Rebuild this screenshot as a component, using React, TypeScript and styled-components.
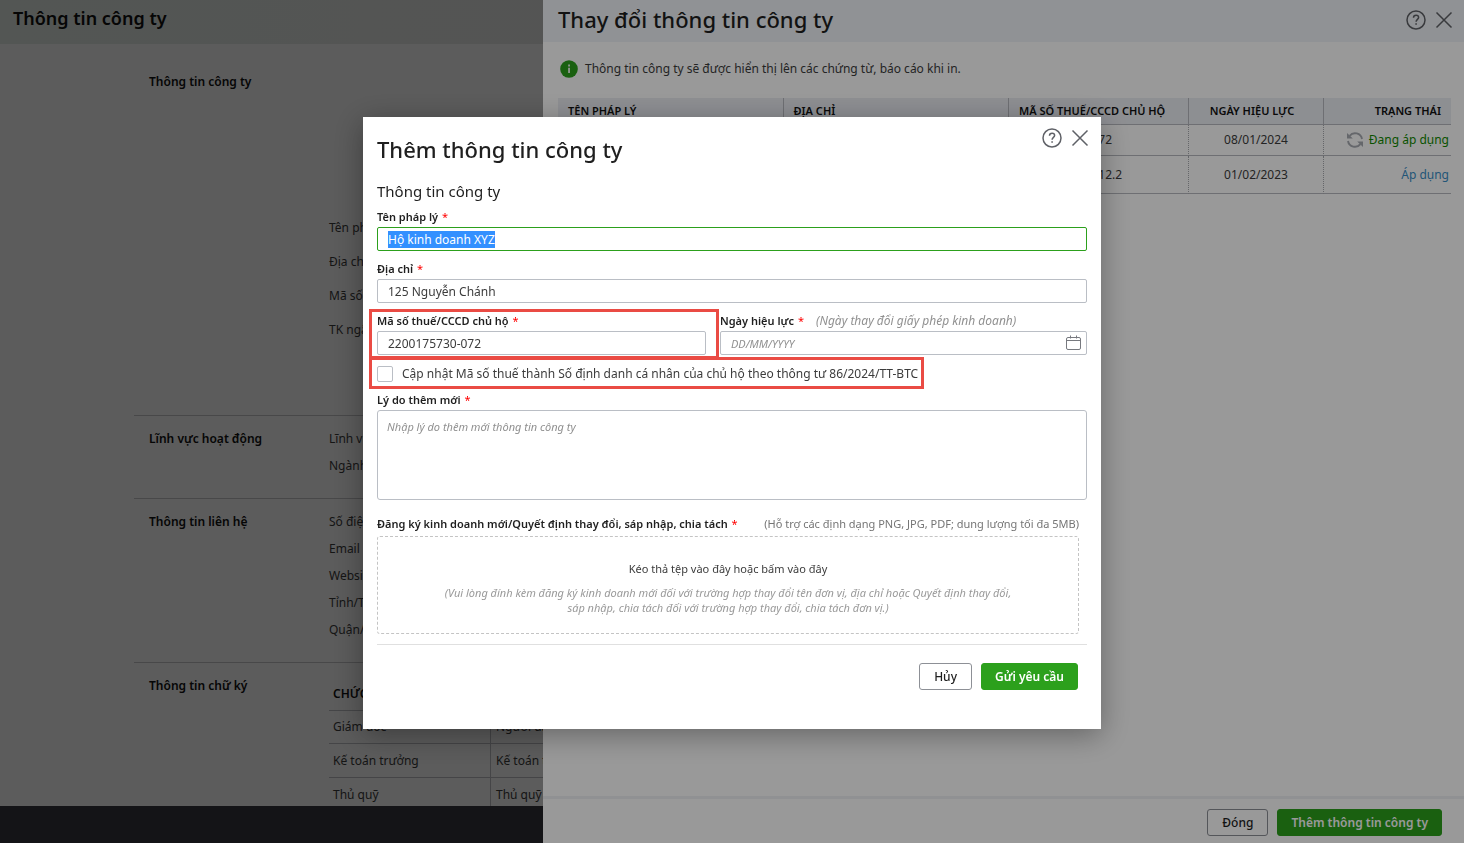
import React, { useEffect, useRef } from "react";
import styled, { createGlobalStyle } from "styled-components";

const GlobalStyle = createGlobalStyle`
  *, *::before, *::after { box-sizing: border-box; }
  body {
    margin: 0;
    font-family: "Noto Sans", sans-serif;
    font-size: 12px;
    line-height: 16px;
    color: #3c3c3c;
    background: #fff;
  }
  button, input, textarea { font-family: inherit; font-size: inherit; color: inherit; margin: 0; }
  h1, h2, h3, p { margin: 0; font-weight: inherit; }
`;

/* ---------- Company page ---------- */

const Page = styled.div`
  display: flex;
  flex-direction: column;
  height: 100vh;
  overflow: hidden;
`;

const PageHeader = styled.header`
  flex: none;
  height: 44px;
  padding: 6px 13px;
  background: linear-gradient(90deg, #e6eeea 0%, #ececec 50%);
`;

const PageTitle = styled.h1`
  font-size: 18px;
  line-height: 24px;
  font-weight: 600;
  color: #111;
`;

const PageBody = styled.main`
  flex: 1;
  min-height: 0;
  overflow: hidden;
  padding-left: 134px;
`;

const PageFooter = styled.div`
  flex: none;
  height: 37px;
  background: #3a3a42;
`;

const Section = styled.section<{ $first?: boolean }>`
  display: grid;
  grid-template-columns: 180px 1fr;
  padding: ${(p) => (p.$first ? "24px 0 68px 15px" : "9px 0 19px 15px")};
  border-top: ${(p) => (p.$first ? "none" : "1px solid #c8c8cc")};
`;

const SectionTitle = styled.h2`
  font-size: 12px;
  line-height: 27px;
  font-weight: 600;
  color: #111;
`;

const FactList = styled.ul<{ $row: number; $offset?: number }>`
  list-style: none;
  margin: ${(p) => p.$offset || 0}px 0 0;
  padding: 0;
  line-height: ${(p) => p.$row}px;
`;

const SignTable = styled.table`
  margin-top: 5px;
  width: 100%;
  border-collapse: separate;
  border-spacing: 0;
  text-align: left;

  th, td {
    height: 34px;
    padding: 0 4px;
    border-bottom: 1px solid #c0c2c6;
    font-weight: 400;
  }
  th { font-weight: 600; color: #111; }
  td + td { padding-left: 5px; }
  th:first-child, td:first-child { width: 162px; }
  td:first-child { border-right: 1px solid #c0c2c6; }
  tbody tr:first-child td { height: 33px; }
`;

/* ---------- Shared parts ---------- */

const Scrim = styled.div`
  position: fixed;
  inset: 0;
  display: flex;
  background: rgba(0, 0, 0, 0.4);
`;

const DialogTitle = styled.h2`
  flex: 1;
  font-size: 22px;
  line-height: 30px;
  font-weight: 500;
  color: #1f1f1f;
`;

const Tools = styled.div`
  display: flex;
  gap: 6px;
`;

const IconButton = styled.button`
  display: grid;
  place-items: center;
  width: 22px;
  height: 22px;
  padding: 0;
  border: 0;
  background: none;
  color: #5f6167;
`;

const Button = styled.button<{ $primary?: boolean }>`
  height: 27px;
  padding: 0 ${(p) => (p.$primary ? 13 : 14)}px;
  border: 1px solid ${(p) => (p.$primary ? "#2ca01c" : "#8d9096")};
  border-radius: 3px;
  background: ${(p) => (p.$primary ? "#2ca01c" : "transparent")};
  color: ${(p) => (p.$primary ? "#fff" : "#1f1f1f")};
  font-weight: ${(p) => (p.$primary ? 600 : 500)};
`;

const Actions = styled.footer<{ $drawer?: boolean }>`
  display: flex;
  justify-content: flex-end;
  gap: 9px;
  padding: ${(p) => (p.$drawer ? "10px 22px 7px" : "18px 9px 39px")};
  margin-top: ${(p) => (p.$drawer ? "auto" : "10px")};
  border-top: ${(p) => (p.$drawer ? "3px solid #f1f2f6" : "1px solid #e0e0e0")};
`;

/* ---------- Drawer ---------- */

const Drawer = styled.aside`
  display: flex;
  flex-direction: column;
  width: 921px;
  max-width: 100%;
  min-height: 100%;
  margin-left: auto;
  background: #fff;
`;

const DrawerHeader = styled.header`
  display: flex;
  align-items: center;
  height: 42px;
  padding: 0 9px 2px 15px;
  background: #f1f4f8;

  ${DialogTitle} { margin-bottom: 2px; }
`;

const Notice = styled.p`
  display: flex;
  align-items: center;
  gap: 7px;
  padding: 18px 17px 20px;
`;

const HistoryTable = styled.table`
  table-layout: fixed;
  width: calc(100% - 28px);
  margin-left: 15px;
  border-collapse: separate;
  border-spacing: 0;

  th, td {
    padding: 0 10px;
    border-bottom: 1px solid #b8bac0;
    border-right: 1px dotted #a8aab0;
    text-align: left;
    font-weight: 400;
  }
  th {
    height: 27px;
    font-size: 11px;
    font-weight: 600;
    color: #111;
    background: #eceef4;
    border-right: 1px solid #b8bac0;
  }
  th:last-child, td:last-child { border-right: 0; text-align: right; }
  th:nth-child(4), td:nth-child(4) { text-align: center; }
  th:nth-child(4) { padding-right: 18px; }
  td:last-child { padding-right: 2px; }
`;

const HistoryRow = styled.tr<{ $height: number }>`
  td { height: ${(p) => p.$height}px; }
`;

const Status = styled.span`
  display: flex;
  align-items: center;
  justify-content: flex-end;
  gap: 5px;
  color: #108a00;
`;

const ApplyLink = styled.a`
  color: #3a8fc8;
  text-decoration: none;
`;

/* ---------- Modal ---------- */

const ModalLayer = styled(Scrim)`
  align-items: flex-start;
  justify-content: center;
  padding-top: 117px;
`;

const Modal = styled.form`
  width: 738px;
  max-width: 100%;
  padding: 0 14px;
  background: #fff;
  box-shadow: 0 6px 28px rgba(0, 0, 0, 0.35);
`;

const ModalHeader = styled.header`
  display: flex;
  align-items: flex-start;
  padding-top: 10px;

  ${DialogTitle} { margin-top: 7px; }
  ${Tools} { margin-right: -4px; }
`;

const Subtitle = styled.h3`
  margin: 17px 0 8px;
  font-size: 15px;
  line-height: 20px;
  color: #1f1f1f;
`;

const Fields = styled.div`
  display: flex;
  flex-direction: column;
  gap: 10px;
`;

const Pair = styled.div`
  display: grid;
  grid-template-columns: 329fr 367fr;
  gap: 14px;
`;

const Field = styled.div`
  position: relative;
  display: flex;
  flex-direction: column;
  min-width: 0;
`;

const LabelRow = styled.div`
  display: flex;
  gap: 12px;
  margin-bottom: 2px;
  line-height: 16px;
  font-size: 11px;
`;

const Label = styled.label`
  font-weight: 600;
  color: #1f1f1f;
`;

const Star = styled.span`
  margin-left: 1px;
  font-weight: 400;
  color: #f00;
`;

const Hint = styled.span<{ $italic?: boolean }>`
  font-size: ${(p) => (p.$italic ? 12 : 11)}px;
  font-style: ${(p) => (p.$italic ? "italic" : "normal")};
  color: ${(p) => (p.$italic ? "#909090" : "#757575")};
`;

const TextInput = styled.input`
  width: 100%;
  height: 24px;
  padding: 1px 10px 0;
  border: 1px solid #babec5;
  border-radius: 2px;
  background: #fff;
  line-height: 16px;
  outline: none;

  &:focus { border-color: #2ca01c; }
  &::selection { background: #3390ff; color: #fff; }
  &::placeholder { font-size: 11px; font-style: italic; color: #909090; opacity: 1; }
`;

const DateBox = styled.div`
  position: relative;
  display: flex;

  svg { position: absolute; right: 6px; top: 4px; color: #77797f; }
`;

const CheckRow = styled.label`
  position: relative;
  display: flex;
  align-items: center;
  gap: 9px;
  width: max-content;
  height: 17px;
`;

const CheckBox = styled.input`
  appearance: none;
  width: 16px;
  height: 16px;
  border: 1px solid #babec5;
  border-radius: 2px;
  background: #fff;
`;

const Highlight = styled.span<{ $inset: string }>`
  position: absolute;
  inset: ${(p) => p.$inset};
  border: 3px solid #ea4b44;
  pointer-events: none;
`;

const TextArea = styled.textarea`
  display: block;
  width: 100%;
  height: 90px;
  padding: 8px 9px;
  border: 1px solid #babec5;
  border-radius: 3px;
  resize: none;
  line-height: 16px;

  &::placeholder { font-size: 11px; font-style: italic; color: #909090; opacity: 1; }
`;

const Upload = styled.div`
  margin: 16px 8px 0 0;

  ${LabelRow} { justify-content: space-between; white-space: nowrap; }
`;

const DropZone = styled.label`
  display: block;
  height: 98px;
  margin-top: 4px;
  padding-top: 24px;
  border: 1px dashed #c4c4c4;
  border-radius: 3px;
  text-align: center;
  font-size: 11px;
  line-height: 15px;
`;

const DropNote = styled.span`
  display: block;
  max-width: 580px;
  margin: 9px auto 0;
  font-style: italic;
  color: #999;
`;

const FileInput = styled.input`
  display: none;
`;

/* ---------- Icons ---------- */

const HelpIcon = () => (
  <svg width="20" height="20" viewBox="0 0 20 20" fill="none" stroke="currentColor" strokeWidth="1.5">
    <circle cx="10" cy="10" r="9" />
    <path d="M7.5 7.8c0-1.5 1.1-2.5 2.6-2.5s2.5.9 2.5 2.2c0 1.8-2.5 2.1-2.5 4.2" />
    <path d="M9.3 14h1.6" strokeWidth="1.6" />
  </svg>
);

const CloseIcon = () => (
  <svg width="18" height="18" viewBox="0 0 18 18" fill="none" stroke="currentColor" strokeWidth="1.5">
    <path d="M1.5 1.5l15 15M16.5 1.5l-15 15" />
  </svg>
);

const InfoIcon = () => (
  <svg width="18" height="18" viewBox="0 0 18 18">
    <circle cx="9" cy="9" r="8.8" fill="#2ca01c" />
    <path d="M8.2 4.6h1.7v1.8H8.2zM8.2 7.7h1.7v5.2H8.2z" fill="#fff" />
  </svg>
);

const SyncIcon = () => (
  <svg width="18" height="18" viewBox="0 0 18 18" fill="none" stroke="#a9acb3" strokeWidth="1.9">
    <path d="M16 8A7 7 0 0 0 3.6 4.9M2 10a7 7 0 0 0 12.4 3.1" />
    <path d="M1 2v5.5h5.8zM17 16v-5.5h-5.8z" fill="#a9acb3" stroke="none" />
  </svg>
);

const CalendarIcon = () => (
  <svg width="15" height="15" viewBox="0 0 15 15" fill="none" stroke="currentColor">
    <rect x="0.5" y="2.5" width="14" height="12" rx="1.5" />
    <path d="M0.5 5.5h14M4.5 0.5v3M10.5 0.5v3" />
  </svg>
);

/* ---------- Data ---------- */

const companyFacts = ["Tên pháp lý", "Địa chỉ", "Mã số thuế", "TK ngân"];

const detailSections = [
  { title: "Lĩnh vực hoạt động", facts: ["Lĩnh vực", "Ngành nghề"] },
  { title: "Thông tin liên hệ", facts: ["Số điện", "Email", "Website", "Tỉnh/TP", "Quận/Huyện"] },
];

const signers = [
  ["Giám đốc", "Người đại diện"],
  ["Kế toán trưởng", "Kế toán trưởng"],
  ["Thủ quỹ", "Thủ quỹ"],
];

const DialogTools = () => (
  <Tools>
    <IconButton type="button" aria-label="Trợ giúp"><HelpIcon /></IconButton>
    <IconButton type="button" aria-label="Đóng"><CloseIcon /></IconButton>
  </Tools>
);

const Required = ({ id, children }: { id: string; children: React.ReactNode }) => (
  <Label htmlFor={id}>
    {children} <Star>*</Star>
  </Label>
);

function CompanyPage() {
  return (
    <Page>
      <PageHeader>
        <PageTitle>Thông tin công ty</PageTitle>
      </PageHeader>
      <PageBody>
        <Section $first>
          <SectionTitle>Thông tin công ty</SectionTitle>
          <FactList $row={34} $offset={143}>
            {companyFacts.map((f) => <li key={f}>{f}</li>)}
          </FactList>
        </Section>
        {detailSections.map((s) => (
          <Section key={s.title}>
            <SectionTitle>{s.title}</SectionTitle>
            <FactList $row={27}>
              {s.facts.map((f) => <li key={f}>{f}</li>)}
            </FactList>
          </Section>
        ))}
        <Section>
          <SectionTitle>Thông tin chữ ký</SectionTitle>
          <SignTable>
            <thead>
              <tr><th>CHỨC DANH</th><th /></tr>
            </thead>
            <tbody>
              {signers.map(([role, name]) => (
                <tr key={role}><td>{role}</td><td>{name}</td></tr>
              ))}
            </tbody>
          </SignTable>
        </Section>
      </PageBody>
      <PageFooter />
    </Page>
  );
}

function HistoryDrawer() {
  return (
    <Scrim>
      <Drawer>
        <DrawerHeader>
          <DialogTitle>Thay đổi thông tin công ty</DialogTitle>
          <DialogTools />
        </DrawerHeader>
        <Notice>
          <InfoIcon />
          Thông tin công ty sẽ được hiển thị lên các chứng từ, báo cáo khi in.
        </Notice>
        <HistoryTable>
          <colgroup>
            <col />
            <col />
            <col width="180" />
            <col width="135" />
            <col width="127" />
          </colgroup>
          <thead>
            <tr>
              <th>TÊN PHÁP LÝ</th>
              <th>ĐỊA CHỈ</th>
              <th>MÃ SỐ THUẾ/CCCD CHỦ HỘ</th>
              <th>NGÀY HIỆU LỰC</th>
              <th>TRẠNG THÁI</th>
            </tr>
          </thead>
          <tbody>
            <HistoryRow $height={31}>
              <td />
              <td />
              <td>2200175730-072</td>
              <td>08/01/2024</td>
              <td><Status><SyncIcon />Đang áp dụng</Status></td>
            </HistoryRow>
            <HistoryRow $height={38}>
              <td />
              <td />
              <td>2200175730-012.2</td>
              <td>01/02/2023</td>
              <td><ApplyLink href="#">Áp dụng</ApplyLink></td>
            </HistoryRow>
          </tbody>
        </HistoryTable>
        <Actions $drawer>
          <Button type="button">Đóng</Button>
          <Button type="button" $primary>Thêm thông tin công ty</Button>
        </Actions>
      </Drawer>
    </Scrim>
  );
}

function AddCompanyModal() {
  const nameRef = useRef<HTMLInputElement>(null);

  useEffect(() => {
    nameRef.current?.focus();
    nameRef.current?.select();
  }, []);

  return (
    <ModalLayer>
      <Modal onSubmit={(e) => e.preventDefault()}>
        <ModalHeader>
          <DialogTitle>Thêm thông tin công ty</DialogTitle>
          <DialogTools />
        </ModalHeader>
        <Subtitle>Thông tin công ty</Subtitle>
        <Fields>
          <Field>
            <LabelRow><Required id="name">Tên pháp lý</Required></LabelRow>
            <TextInput id="name" ref={nameRef} defaultValue="Hộ kinh doanh XYZ" />
          </Field>
          <Field>
            <LabelRow><Required id="address">Địa chỉ</Required></LabelRow>
            <TextInput id="address" defaultValue="125 Nguyễn Chánh" />
          </Field>
          <Pair>
            <Field>
              <LabelRow><Required id="tax">Mã số thuế/CCCD chủ hộ</Required></LabelRow>
              <TextInput id="tax" defaultValue="2200175730-072" />
              <Highlight $inset="-4px -13px -4px -8px" />
            </Field>
            <Field>
              <LabelRow>
                <Required id="date">Ngày hiệu lực</Required>
                <Hint $italic>(Ngày thay đổi giấy phép kinh doanh)</Hint>
              </LabelRow>
              <DateBox>
                <TextInput id="date" placeholder="DD/MM/YYYY" />
                <CalendarIcon />
              </DateBox>
            </Field>
          </Pair>
          <CheckRow>
            <CheckBox type="checkbox" />
            Cập nhật Mã số thuế thành Số định danh cá nhân của chủ hộ theo thông tư 86/2024/TT-BTC
            <Highlight $inset="-8px -6px -7px -8px" />
          </CheckRow>
          <Field>
            <LabelRow><Required id="reason">Lý do thêm mới</Required></LabelRow>
            <TextArea id="reason" placeholder="Nhập lý do thêm mới thông tin công ty" />
          </Field>
        </Fields>
        <Upload>
          <LabelRow>
            <Required id="file">Đăng ký kinh doanh mới/Quyết định thay đổi, sáp nhập, chia tách</Required>
            <Hint>(Hỗ trợ các định dạng PNG, JPG, PDF; dung lượng tối đa 5MB)</Hint>
          </LabelRow>
          <DropZone>
            <FileInput id="file" type="file" />
            Kéo thả tệp vào đây hoặc bấm vào đây
            <DropNote>
              (Vui lòng đính kèm đăng ký kinh doanh mới đối với trường hợp thay đổi tên đơn vị, địa chỉ hoặc Quyết
              định thay đổi, sáp nhập, chia tách đối với trường hợp thay đổi, chia tách đơn vị.)
            </DropNote>
          </DropZone>
        </Upload>
        <Actions>
          <Button type="button">Hủy</Button>
          <Button type="submit" $primary>Gửi yêu cầu</Button>
        </Actions>
      </Modal>
    </ModalLayer>
  );
}

export default function App() {
  return (
    <>
      <GlobalStyle />
      <CompanyPage />
      <HistoryDrawer />
      <AddCompanyModal />
    </>
  );
}
